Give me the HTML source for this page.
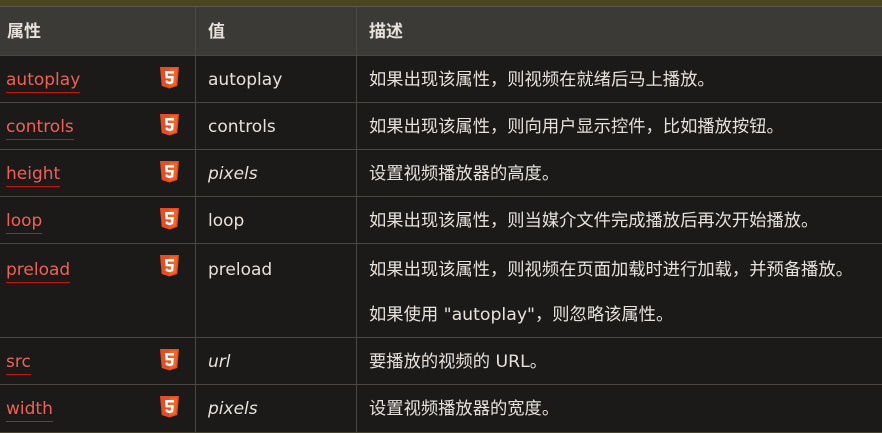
<!DOCTYPE html>
<html><head><meta charset="utf-8"><style>
body{margin:0;width:882px;height:433px;background:#4a4520;overflow:hidden;font-family:"DejaVu Sans","Noto Sans CJK SC",sans-serif;font-size:17px;color:#e6e1dc;position:relative}
.t{position:absolute;left:0;top:6px;width:882px;height:425px;background:#1b1a19;border-top:1px solid #5a564f}
.h{position:absolute;left:0;top:0;width:882px;height:48px;background:#3b3a37}
.hl{position:absolute;left:0;width:882px;height:1px;background:#4a4743}
.vl{position:absolute;top:0;width:1px;height:425px;background:#4a4743}
.c{position:absolute;white-space:nowrap;line-height:20px}
.d{font-size:17.3px}
.b{font-weight:bold;font-size:17px}
.a{color:#f06058;border-bottom:1.5px solid #c8140e;padding-bottom:2px}
.i{font-style:italic}
svg{position:absolute}
</style></head><body>
<div class="t">
<div class="h"></div>
<div class="hl" style="top:48px"></div><div class="hl" style="top:95px"></div><div class="hl" style="top:142px"></div><div class="hl" style="top:189px"></div><div class="hl" style="top:236px"></div><div class="hl" style="top:330px"></div><div class="hl" style="top:377px"></div>
<div class="vl" style="left:195px"></div><div class="vl" style="left:356px"></div>
<div class="c b" style="left:7px;top:15px">属性</div>
<div class="c b" style="left:208px;top:15px">值</div>
<div class="c b" style="left:369px;top:15px">描述</div>

<div class="c" style="left:6px;top:63px"><span class="a">autoplay</span></div>
<div class="c" style="left:208px;top:63px">autoplay</div>
<div class="c d" style="left:369px;top:63px">如果出现该属性，则视频在就绪后马上播放。</div>

<div class="c" style="left:6px;top:110px"><span class="a">controls</span></div>
<div class="c" style="left:208px;top:110px">controls</div>
<div class="c d" style="left:369px;top:110px">如果出现该属性，则向用户显示控件，比如播放按钮。</div>

<div class="c" style="left:6px;top:157px"><span class="a">height</span></div>
<div class="c i" style="left:208px;top:157px">pixels</div>
<div class="c d" style="left:369px;top:157px">设置视频播放器的高度。</div>

<div class="c" style="left:6px;top:204px"><span class="a">loop</span></div>
<div class="c" style="left:208px;top:204px">loop</div>
<div class="c d" style="left:369px;top:204px">如果出现该属性，则当媒介文件完成播放后再次开始播放。</div>

<div class="c" style="left:6px;top:253px"><span class="a">preload</span></div>
<div class="c" style="left:208px;top:253px">preload</div>
<div class="c d" style="left:369px;top:253px">如果出现该属性，则视频在页面加载时进行加载，并预备播放。</div>
<div class="c d" style="left:369px;top:298px">如果使用 "autoplay"，则忽略该属性。</div>

<div class="c" style="left:6px;top:345px"><span class="a">src</span></div>
<div class="c i" style="left:208px;top:345px">url</div>
<div class="c d" style="left:369px;top:345px">要播放的视频的 URL。</div>

<div class="c" style="left:6px;top:392px"><span class="a">width</span></div>
<div class="c i" style="left:208px;top:392px">pixels</div>
<div class="c d" style="left:369px;top:392px">设置视频播放器的宽度。</div>
</div>
<svg width="0" height="0"><defs><g id="h5"><path d="M0 0H19L17.3 19L9.5 21.5L1.7 19Z" fill="#e44d26"/><path d="M9.5 1.5H17.3L15.9 18L9.5 20Z" fill="#f16529"/><path d="M5 4H14V6.5H7.6L7.9 9H13.8L13.2 16L9.5 17.2L5.8 16L5.6 13.5H8L8.1 14.3L9.5 14.7L10.9 14.3L11.1 11.4H5.6Z" fill="#fff"/></g></defs></svg>
<svg style="left:160px;top:67px" width="19" height="22"><use href="#h5"/></svg>
<svg style="left:160px;top:114px" width="19" height="22"><use href="#h5"/></svg>
<svg style="left:160px;top:161px" width="19" height="22"><use href="#h5"/></svg>
<svg style="left:160px;top:208px" width="19" height="22"><use href="#h5"/></svg>
<svg style="left:160px;top:255px" width="19" height="22"><use href="#h5"/></svg>
<svg style="left:160px;top:349px" width="19" height="22"><use href="#h5"/></svg>
<svg style="left:160px;top:396px" width="19" height="22"><use href="#h5"/></svg>
</body></html>
